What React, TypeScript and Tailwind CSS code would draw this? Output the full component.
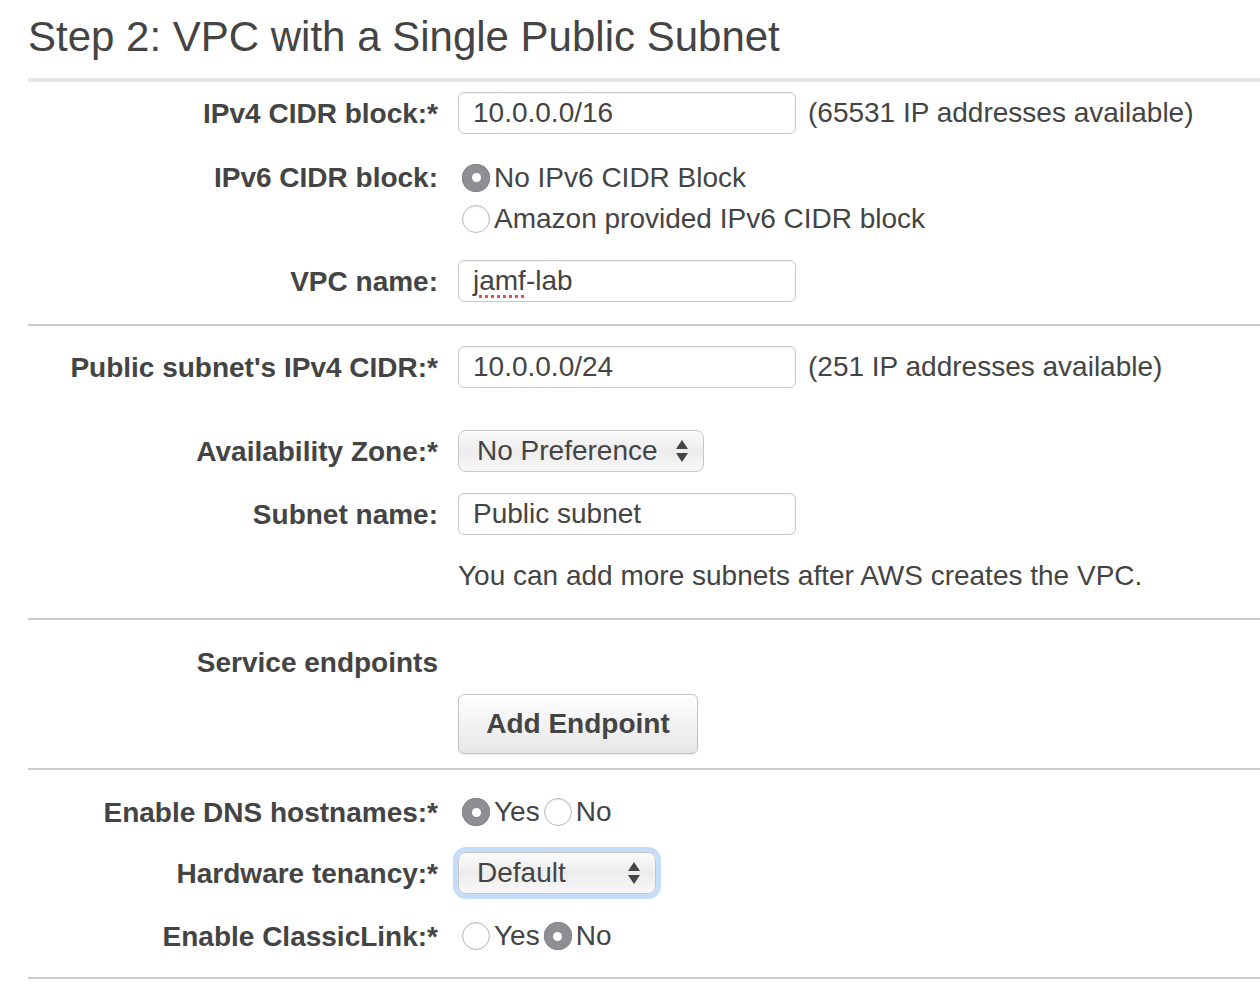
import React from "react"

const font = { fontFamily: '"Liberation Sans", Arial, Helvetica, sans-serif' }

function Radio({ checked }: { checked?: boolean }) {
  return checked ? (
    <span className="inline-flex h-[28px] w-[28px] shrink-0 items-center justify-center rounded-full bg-[#8e8e93] shadow-[inset_0_0_0_1px_#85858a]">
      <span className="h-[9px] w-[9px] rounded-full bg-white" />
    </span>
  ) : (
    <span className="inline-block h-[28px] w-[28px] shrink-0 rounded-full border border-[#b9b9b9] bg-white shadow-[inset_0_1px_2px_rgba(0,0,0,0.08)]" />
  )
}

function Option({ checked, label }: { checked?: boolean; label: string }) {
  return (
    <span className="flex items-center gap-[4px]">
      <Radio checked={checked} />
      <span>{label}</span>
    </span>
  )
}

function Arrows() {
  return (
    <svg width="14" height="24" viewBox="0 0 14 24" className="shrink-0">
      <path d="M7 1 L13 10 L1 10 Z" fill="#444" />
      <path d="M7 23 L13 14 L1 14 Z" fill="#444" />
    </svg>
  )
}

function Select({ value, width, focused }: { value: string; width: string; focused?: boolean }) {
  return (
    <div
      className={
        "flex h-[42px] items-center justify-between rounded-[8px] border border-[#c6c6c6] bg-gradient-to-b from-[#fbfbfb] via-[#ececec] to-[#f8f8f8] pl-[18px] pr-[14px] shadow-[inset_0_1px_0_#fff] " +
        width +
        (focused ? " ring-[5px] ring-[#c5ddf8]" : "")
      }
    >
      <span>{value}</span>
      <Arrows />
    </div>
  )
}

function TextInput({ children }: { children: React.ReactNode }) {
  return (
    <div className="flex h-[42px] w-[338px] items-center rounded-[6px] border border-[#c8c8c8] bg-white pl-[14px] shadow-[inset_0_1px_2px_rgba(0,0,0,0.06)]">
      {children}
    </div>
  )
}

function Row({
  label,
  children,
  className = "",
  start,
}: {
  label: string
  children?: React.ReactNode
  className?: string
  start?: boolean
}) {
  return (
    <div className={"flex " + (start ? "items-start " : "items-center ") + className}>
      <div className="w-[410px] shrink-0 text-right font-bold leading-[41px]">{label}</div>
      <div className="ml-[20px] flex items-center">{children}</div>
    </div>
  )
}

export default function App() {
  return (
    <div className="min-h-screen bg-white pl-[28px] text-[28px] text-[#444]" style={font}>
      <h1 className="pt-[12px] text-[42px] leading-[50px] font-normal">Step 2: VPC with a Single Public Subnet</h1>
      <div className="mt-[16px] h-[4px] bg-[#e5e5e5]" />

      {/* VPC */}
      <Row label="IPv4 CIDR block:*" className="mt-[10px]">
        <TextInput>10.0.0.0/16</TextInput>
        <span className="ml-[12px]">(65531 IP addresses available)</span>
      </Row>

      <Row label="IPv6 CIDR block:" className="mt-[23px]" start>
        <div className="ml-[4px] flex flex-col leading-[41px]">
          <Option checked label="No IPv6 CIDR Block" />
          <Option label="Amazon provided IPv6 CIDR block" />
        </div>
      </Row>

      <Row label="VPC name:" className="mt-[21px]">
        <TextInput>
          <span className="underline decoration-[#e2534b] decoration-dotted decoration-[3px] underline-offset-[5px]">
            jamf
          </span>
          -lab
        </TextInput>
      </Row>

      <div className="mt-[22px] h-[2px] bg-[#cccccc]" />

      {/* Subnet */}
      <Row label="Public subnet's IPv4 CIDR:*" className="mt-[20px]">
        <TextInput>10.0.0.0/24</TextInput>
        <span className="ml-[12px]">(251 IP addresses available)</span>
      </Row>

      <Row label="Availability Zone:*" className="mt-[42px]">
        <Select value="No Preference" width="w-[246px]" />
      </Row>

      <Row label="Subnet name:" className="mt-[21px]">
        <TextInput>Public subnet</TextInput>
      </Row>

      <div className="mt-[21px] ml-[430px] leading-[40px]">You can add more subnets after AWS creates the VPC.</div>

      <div className="mt-[22px] h-[2px] bg-[#cccccc]" />

      {/* Endpoints */}
      <Row label="Service endpoints" className="mt-[22px]" />
      <div className="mt-[11px] ml-[430px]">
        <button className="h-[60px] w-[240px] rounded-[6px] border border-[#c2c2c2] bg-gradient-to-b from-white to-[#e6e6e6] font-bold text-[#444] shadow-[0_1px_1px_rgba(0,0,0,0.08)]">
          Add Endpoint
        </button>
      </div>

      <div className="mt-[14px] h-[2px] bg-[#cccccc]" />

      {/* Options */}
      <Row label="Enable DNS hostnames:*" className="mt-[21px]">
        <div className="ml-[4px] flex items-center gap-[4px]">
          <Option checked label="Yes" />
          <Option label="No" />
        </div>
      </Row>

      <Row label="Hardware tenancy:*" className="mt-[19px]">
        <Select value="Default" width="w-[198px]" focused />
      </Row>

      <Row label="Enable ClassicLink:*" className="mt-[21px]">
        <div className="ml-[4px] flex items-center gap-[4px]">
          <Option label="Yes" />
          <Option checked label="No" />
        </div>
      </Row>

      <div className="mt-[20px] h-[2px] bg-[#cccccc]" />
    </div>
  )
}
